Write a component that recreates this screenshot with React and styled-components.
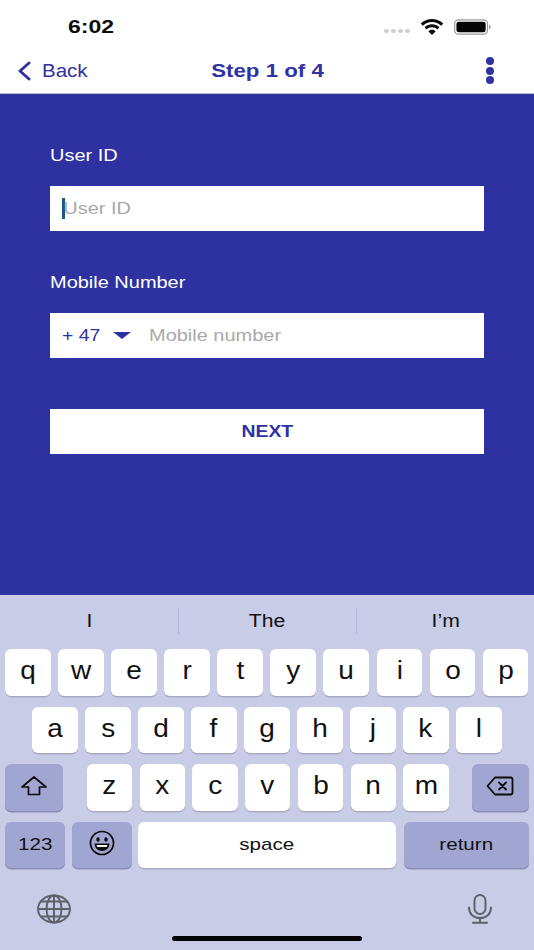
import styled, { createGlobalStyle } from "styled-components";

const Global = createGlobalStyle`
  html, body { margin: 0; padding: 0; background: #fff; }
  * { box-sizing: border-box; }
  body { font-family: "Liberation Sans", Arial, sans-serif; }
`;

const Page = styled.div`
  width: 534px;
  height: 950px;
  display: flex;
  flex-direction: column;
  overflow: hidden;
`;

// the reference is stretched sideways, so text is widened the same way
const Wide = styled.span`
  display: inline-block;
  white-space: nowrap;
  transform: scaleX(${({ $scale }) => $scale || 1.21});
  transform-origin: ${({ $origin }) => $origin || "left"} center;
`;

const StatusBar = styled.div`
  height: 50px;
  display: flex;
  align-items: center;
  padding: 4px 43px 0 68px;
  color: #0b0b0b;
`;

const Time = styled.div`
  font-size: 19px;
  font-weight: 700;
  flex: 1;
`;

const StatusIcons = styled.div`
  display: flex;
  align-items: center;
`;

const SignalDots = styled.div`
  display: flex;
  gap: 2px;
  margin: 8px 10px 0 0;
`;

const SignalDot = styled.span`
  width: 5px;
  height: 4.5px;
  border-radius: 50%;
  background: #cfcfcf;
`;

const NavBar = styled.div`
  height: 44px;
  display: grid;
  grid-template-columns: 1fr auto 1fr;
  align-items: center;
  padding: 0 17px 2px;
  color: #2e32a2;
  border-bottom: 1px solid #b9bad8;
`;

const BackLink = styled.div`
  display: flex;
  align-items: center;
  gap: 11px;
  font-size: 18px;
`;

const BackText = styled(Wide)`
  margin-top: 1px;
`;

const NavTitle = styled.div`
  font-size: 18.4px;
  font-weight: 700;
  text-align: center;
`;

const MenuDots = styled.div`
  justify-self: end;
  margin-right: 23px;
  display: flex;
  flex-direction: column;
  gap: 1.5px;
`;

const MenuDot = styled.span`
  width: 8px;
  height: 8px;
  border-radius: 50%;
  background: #2e32a2;
`;

const Main = styled.main`
  height: 501px;
  background: #2e32a0;
  padding: 51px 50px 0;
`;

const FieldLabel = styled.div`
  height: 21px;
  font-size: 16.5px;
  line-height: 21px;
  color: #fff;
  margin-bottom: 20px;
`;

const FieldBox = styled.div`
  position: relative;
  height: 45px;
  background: #fff;
  display: flex;
  align-items: center;
  margin-bottom: 41px;
`;

const Caret = styled.span`
  position: absolute;
  left: 12px;
  top: 12px;
  width: 2.5px;
  height: 21px;
  background: #1b5a7e;
`;

const TextInput = styled.input`
  flex: 1;
  min-width: 0;
  height: 100%;
  border: none;
  outline: none;
  background: transparent;
  padding: 0 0 0 ${({ $inset }) => $inset || 0}px;
  font: 16.5px "Liberation Sans", Arial, sans-serif;
  transform: scaleX(1.21);
  transform-origin: left center;
  &::placeholder { color: #a9a9a9; opacity: 1; }
`;

const CountryCode = styled.div`
  flex: 0 0 99px;
  display: flex;
  align-items: center;
  padding-left: 12px;
  color: #2e32a2;
  font-size: 16px;
`;

const CaretDown = styled.span`
  position: absolute;
  left: 63px;
  top: 19px;
  width: 0;
  height: 0;
  border-left: 9px solid transparent;
  border-right: 9px solid transparent;
  border-top: 7.5px solid #2e32a2;
`;

const NextButton = styled.button`
  display: block;
  width: 100%;
  height: 45px;
  margin-top: 51px;
  border: none;
  background: #fff;
  color: #2e32a2;
  font: 700 16px "Liberation Sans", Arial, sans-serif;
`;

const Keyboard = styled.section`
  height: 355px;
  background: #c9cce6;
  display: flex;
  flex-direction: column;
  color: #111;
`;

const Suggestions = styled.div`
  height: 54px;
  padding-bottom: 2px;
  display: grid;
  grid-template-columns: 178px 178px 178px;
  align-items: center;
`;

const Suggestion = styled.div`
  height: 26px;
  line-height: 26px;
  text-align: center;
  font-size: 17.5px;
  border-left: ${({ $divider }) => ($divider ? "1px solid #b4b7d6" : "none")};
`;

const KeyRows = styled.div`
  display: flex;
  flex-direction: column;
  gap: 11px;
  padding: 0 5.5px 0 5px;
`;

const KeyRow = styled.div`
  display: flex;
  gap: 7.3px;
  justify-content: ${({ $spread }) => ($spread ? "space-between" : "flex-start")};
  padding: 0 ${({ $inset }) => $inset || 0}px;
`;

const LetterGroup = styled.div`
  width: 362px;
  margin-left: 1px;
  display: flex;
  gap: 7.3px;
`;

const Key = styled.div`
  flex: ${({ $width }) => ($width ? `0 0 ${$width}px` : "1 1 0")};
  margin-left: ${({ $nudge }) => $nudge || 0}px;
  height: 46.5px;
  padding-bottom: ${({ $small }) => ($small ? 0 : 3)}px;
  border-radius: 6px;
  display: flex;
  align-items: center;
  justify-content: center;
  background: ${({ $dark }) => ($dark ? "#a1a5d1" : "#fff")};
  box-shadow: 0 1.5px 0 ${({ $dark }) => ($dark ? "#8a8db5" : "#a9abc4")};
  font-size: ${({ $small }) => ($small ? 17 : 25)}px;
`;

const BottomIcons = styled.div`
  height: 44px;
  margin-top: 19px;
  padding: 0 41px 0 37px;
  display: flex;
  align-items: center;
  justify-content: space-between;
`;

const HomeBar = styled.div`
  width: 190px;
  height: 5px;
  margin: 5px auto 0;
  border-radius: 3px;
  background: #050505;
`;

const WifiIcon = () => (
  <svg width="24" height="16" viewBox="0 0 24 16" fill="#0b0b0b">
    <path d="M12 3c3.600 0 6.800 1.400 9.200 3.700L23.300 4.500C20.300 1.700 16.400 0 12 0S3.700 1.700.7 4.500l2.100 2.200C5.200 4.400 8.400 3 12 3z" />
    <path d="M12 8.300c2.100 0 4 .8 5.400 2.100l2.100-2.200C17.500 6.400 14.900 5.300 12 5.300S6.500 6.400 4.500 8.200l2.100 2.200c1.400-1.300 3.300-2.100 5.400-2.100z" />
    <path d="M12 10.700c-1.500 0-2.800.6-3.700 1.500L12 16l3.700-3.800c-.9-.9-2.200-1.500-3.700-1.500z" />
  </svg>
);

const BatteryIcon = () => (
  <svg width="37" height="16" viewBox="0 0 38 16" style={{ marginLeft: 10 }}>
    <rect x="0.6" y="0.6" width="33.800" height="14.800" rx="4" fill="none" stroke="#9a9a9a" strokeWidth="1.2" />
    <rect x="2.500" y="2.500" width="30" height="11" rx="2.500" fill="#050505" />
    <path d="M36 5.500c1 .4 1.600 1.400 1.600 2.500s-.6 2.100-1.600 2.500z" fill="#9a9a9a" />
  </svg>
);

const BackChevron = () => (
  <svg width="14" height="20" viewBox="0 0 14 20" fill="none" stroke="#2e32a2" strokeWidth="3" strokeLinecap="round" strokeLinejoin="round">
    <path d="M12 2 3 10l9 8" />
  </svg>
);

const ShiftIcon = () => (
  <svg width="28" height="22" viewBox="0 0 28 22" fill="none" stroke="#0c0c0c" strokeWidth="1.700" strokeLinejoin="round">
    <path d="M14 2 2 12h6.500v7.500h11V12H26z" />
  </svg>
);

const DeleteIcon = () => (
  <svg width="28" height="20" viewBox="0 0 28 20" fill="none" stroke="#0c0c0c" strokeWidth="1.800" strokeLinejoin="round" strokeLinecap="round">
    <path d="M9 1.500h15.500a2 2 0 0 1 2 2v13a2 2 0 0 1-2 2H9L1.500 10z" />
    <path d="m13 6.500 7 7m0-7-7 7" />
  </svg>
);

const EmojiIcon = () => (
  <svg width="26" height="26" viewBox="0 0 26 26">
    <circle cx="13" cy="13" r="11.500" fill="none" stroke="#0c0c0c" strokeWidth="1.700" />
    <ellipse cx="9" cy="9.500" rx="1.700" ry="2.300" fill="#0c0c0c" />
    <ellipse cx="17" cy="9.500" rx="1.700" ry="2.300" fill="#0c0c0c" />
    <path d="M5.500 13.500h15c0 4.500-3.300 7.500-7.500 7.500s-7.500-3-7.500-7.500z" fill="#0c0c0c" />
    <path d="M7.500 15h11c-.3 1-.6 1.600-1 2h-9c-.4-.4-.7-1-1-2z" fill="#fff" />
  </svg>
);

const GlobeIcon = () => (
  <svg width="34" height="30" viewBox="0 0 34 30" fill="none" stroke="#5d6068" strokeWidth="1.900">
    <ellipse cx="17" cy="15" rx="16" ry="13.500" />
    <ellipse cx="17" cy="15" rx="7.500" ry="13.500" />
    <path d="M17 1.500v27M1 15h32M3.500 7.500h27M3.500 22.500h27" />
  </svg>
);

const MicIcon = () => (
  <svg width="26" height="30" viewBox="0 0 26 30" fill="none" stroke="#5d6068" strokeWidth="1.900" strokeLinecap="round">
    <rect x="7.500" y="1" width="11" height="19" rx="5.500" />
    <path d="M2 13.500c0 6.500 4.500 10.500 11 10.500s11-4 11-10.500M13 24v4.500M6 28.800h14" />
  </svg>
);

const rowOne = ["q", "w", "e", "r", "t", "y", "u", "i", "o", "p"];
const rowTwo = ["a", "s", "d", "f", "g", "h", "j", "k", "l"];
const rowThree = ["z", "x", "c", "v", "b", "n", "m"];

const LetterKey = ({ letter }) => (
  <Key>
    <Wide $scale={1.12} $origin="center">{letter}</Wide>
  </Key>
);

export default function App() {
  return (
    <Page>
      <Global />
      <StatusBar>
        <Time>
          <Wide>6:02</Wide>
        </Time>
        <StatusIcons>
          <SignalDots>
            {[0, 1, 2, 3].map((i) => (
              <SignalDot key={i} />
            ))}
          </SignalDots>
          <WifiIcon />
          <BatteryIcon />
        </StatusIcons>
      </StatusBar>

      <NavBar>
        <BackLink>
          <BackChevron />
          <BackText $scale={1.14}>Back</BackText>
        </BackLink>
        <NavTitle>
          <Wide $origin="center">Step 1 of 4</Wide>
        </NavTitle>
        <MenuDots>
          <MenuDot />
          <MenuDot />
          <MenuDot />
        </MenuDots>
      </NavBar>

      <Main>
        <FieldLabel>
          <Wide>User ID</Wide>
        </FieldLabel>
        <FieldBox>
          <Caret />
          <TextInput $inset={11} placeholder="User ID" readOnly />
        </FieldBox>
        <FieldLabel>
          <Wide>Mobile Number</Wide>
        </FieldLabel>
        <FieldBox>
          <CountryCode>
            <Wide>+ 47</Wide>
          </CountryCode>
          <CaretDown />
          <TextInput placeholder="Mobile number" readOnly />
        </FieldBox>
        <NextButton>
          <Wide $origin="center">NEXT</Wide>
        </NextButton>
      </Main>

      <Keyboard>
        <Suggestions>
          <Suggestion>
            <Wide $origin="center">I</Wide>
          </Suggestion>
          <Suggestion $divider>
            <Wide $origin="center">The</Wide>
          </Suggestion>
          <Suggestion $divider>
            <Wide $origin="center">I’m</Wide>
          </Suggestion>
        </Suggestions>
        <KeyRows>
          <KeyRow>
            {rowOne.map((k) => (
              <LetterKey key={k} letter={k} />
            ))}
          </KeyRow>
          <KeyRow $inset={27}>
            {rowTwo.map((k) => (
              <LetterKey key={k} letter={k} />
            ))}
          </KeyRow>
          <KeyRow $spread>
            <Key $dark $width={58}>
              <ShiftIcon />
            </Key>
            <LetterGroup>
              {rowThree.map((k) => (
                <LetterKey key={k} letter={k} />
              ))}
            </LetterGroup>
            <Key $dark $width={57}>
              <DeleteIcon />
            </Key>
          </KeyRow>
          <KeyRow>
            <Key $dark $small $width={60}>
              <Wide $origin="center">123</Wide>
            </Key>
            <Key $dark $width={60}>
              <EmojiIcon />
            </Key>
            <Key $small $nudge={-2}>
              <Wide $origin="center">space</Wide>
            </Key>
            <Key $dark $small $width={125}>
              <Wide $origin="center">return</Wide>
            </Key>
          </KeyRow>
        </KeyRows>
        <BottomIcons>
          <GlobeIcon />
          <MicIcon />
        </BottomIcons>
        <HomeBar />
      </Keyboard>
    </Page>
  );
}
